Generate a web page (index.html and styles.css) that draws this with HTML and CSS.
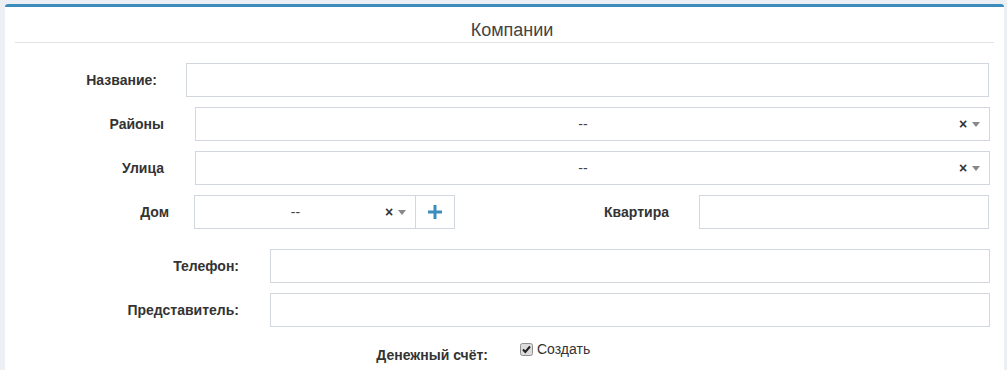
FILE: index.html
```html
<!DOCTYPE html>
<html lang="ru">
<head>
    <meta charset="UTF-8">
    <meta name="viewport" content="width=device-width, initial-scale=1.0">
    <title>Компании</title>
    <link rel="stylesheet" href="styles.css">
</head>
<body>
    <div class="box">
        <div class="box-header">
            <h3 class="box-title">Компании</h3>
        </div>
        <form class="box-body">
            <div class="form-row">
                <label class="lbl lbl-name" for="name">Название:</label>
                <input class="field" type="text" id="name">
            </div>

            <div class="form-row row-select">
                <label class="lbl lbl-area">Районы</label>
                <div class="select">
                    <span class="select-value">--</span>
                    <span class="select-clear">×</span>
                    <span class="select-arrow"></span>
                </div>
            </div>

            <div class="form-row row-select">
                <label class="lbl lbl-area">Улица</label>
                <div class="select">
                    <span class="select-value">--</span>
                    <span class="select-clear">×</span>
                    <span class="select-arrow"></span>
                </div>
            </div>

            <div class="form-row row-house">
                <label class="lbl lbl-house">Дом</label>
                <div class="select select-small">
                    <span class="select-value">--</span>
                    <span class="select-clear">×</span>
                    <span class="select-arrow"></span>
                </div>
                <button type="button" class="btn-add">
                    <svg width="14" height="14" viewBox="0 0 14 14">
                        <rect x="5.5" y="0" width="3" height="14" fill="#3c8dbc"/>
                        <rect x="0" y="5.5" width="14" height="3" fill="#3c8dbc"/>
                    </svg>
                </button>
                <label class="lbl lbl-flat" for="flat">Квартира</label>
                <input class="field" type="text" id="flat">
            </div>

            <div class="form-row row-wide">
                <label class="lbl lbl-phone" for="phone">Телефон:</label>
                <input class="field" type="text" id="phone">
            </div>

            <div class="form-row row-wide">
                <label class="lbl lbl-phone" for="agent">Представитель:</label>
                <input class="field" type="text" id="agent">
            </div>

            <div class="form-row row-check">
                <label class="lbl lbl-money">Денежный счёт:</label>
                <label class="checkbox">
                    <svg class="check-icon" width="13" height="13" viewBox="0 0 13 13">
                        <rect x="0.5" y="0.5" width="12" height="12" rx="2" fill="#dcdcdc" stroke="#8f8f8f"/>
                        <path d="M3 6.5 L5.3 9 L10 3.5" fill="none" stroke="#222" stroke-width="2"/>
                    </svg>
                    Создать
                </label>
            </div>
        </form>
    </div>
</body>
</html>
```

FILE: styles.css
```css
body {
    font-family: "Liberation Sans", Arial, sans-serif;
    margin: 0;
    padding: 4px 3px 0 5px;
    background-color: #ecf0f5;
    color: #333;
}

.box {
    background-color: #fff;
    border-top: 3px solid #3c8dbc;
    border-radius: 3px 3px 0 0;
    height: 370px;
}

.box-header {
    margin: 0 10px;
    padding: 13px 0 2px 15px;
    border-bottom: 1px solid #e3e3e3;
    text-align: center;
}

.box-title {
    margin: 0;
    font-size: 18px;
    font-weight: normal;
    line-height: 20px;
    color: #444;
}

.box-body {
    padding-top: 20px;
}

.form-row {
    display: flex;
    align-items: center;
    margin-bottom: 10px;
    margin-right: 15px;
}

.row-select,
.row-wide {
    margin-right: 14px;
}

.row-house {
    margin-bottom: 20px;
}

.lbl {
    flex: none;
    font-size: 14px;
    font-weight: bold;
    text-align: right;
}

.lbl-name { width: 152px; margin-right: 29px; }
.lbl-area { width: 159px; margin-right: 31px; }
.lbl-house { width: 164px; margin-right: 25px; }
.lbl-flat { width: 214px; margin-right: 30px; }
.lbl-phone { width: 234px; margin-right: 31px; }
.lbl-money { width: 483px; margin-right: 32px; line-height: 20px; padding-top: 8px; }

.field {
    flex: 1;
    height: 34px;
    box-sizing: border-box;
    border: 1px solid #d2d6de;
    margin: 0;
    padding: 6px 12px;
    font-size: 14px;
    outline: none;
}

.select {
    flex: 1;
    display: flex;
    align-items: center;
    height: 34px;
    box-sizing: border-box;
    border: 1px solid #d2d6de;
    padding-left: 11px;
    font-size: 14px;
    color: #444;
}

.select-small {
    flex: none;
    width: 222px;
}

.select-value {
    flex: 1;
    text-align: center;
}

.select-clear {
    width: 8px;
    margin-right: 5px;
    font-size: 14px;
    font-weight: bold;
    line-height: 1;
    text-align: center;
    color: #333;
}

.select-arrow {
    width: 0;
    height: 0;
    border-style: solid;
    border-width: 5px 4px 0 4px;
    border-color: #888 transparent transparent transparent;
    margin-right: 9px;
}

.btn-add {
    flex: none;
    display: flex;
    align-items: center;
    justify-content: center;
    width: 40px;
    height: 34px;
    margin: 0 0 0 -1px;
    padding: 0;
    background-color: #fff;
    border: 1px solid #d2d6de;
}

.row-check {
    align-items: flex-start;
}

.checkbox {
    display: flex;
    align-items: center;
    gap: 4px;
    padding-top: 2px;
    font-size: 14px;
    line-height: 20px;
    color: #333;
}
```
